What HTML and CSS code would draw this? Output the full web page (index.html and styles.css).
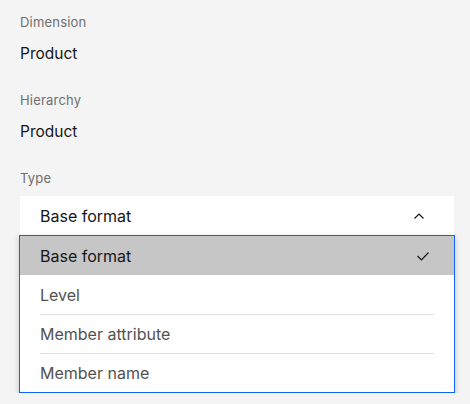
FILE: index.html
```html
<!DOCTYPE html>
<html lang="en">
<head>
  <meta charset="UTF-8" />
  <meta name="viewport" content="width=device-width, initial-scale=1.0" />
  <title>Type</title>
  <link rel="stylesheet" href="styles.css">
</head>
<body>
  <div class="panel">
    <div class="field">
      <div class="label">Dimension</div>
      <div class="value">Product</div>
    </div>
    <div class="field">
      <div class="label">Hierarchy</div>
      <div class="value">Product</div>
    </div>
    <div class="field select-field">
      <div class="label">Type</div>
      <div class="dropdown">
        <button type="button" class="dropdown-head">
          <span>Base format</span>
          <svg class="chevron" width="16" height="16" viewBox="0 0 16 16"><path d="M3.5 10.5 8 6l4.5 4.5" fill="none" stroke="#161616" stroke-width="1.2"/></svg>
        </button>
        <ul class="menu">
          <li class="option selected">
            <span class="option-text">Base format</span>
            <svg class="check" width="16" height="16" viewBox="0 0 16 16"><path d="M2.5 8 6.5 12 13.5 4.5" fill="none" stroke="#161616" stroke-width="1.2"/></svg>
          </li>
          <li class="option"><span class="option-text">Level</span></li>
          <li class="option"><span class="option-text">Member attribute</span></li>
          <li class="option"><span class="option-text">Member name</span></li>
        </ul>
      </div>
    </div>
  </div>
</body>
</html>
```

FILE: styles.css
```css
body {
  margin: 0;
  background-color: #f4f4f4;
  font-family: "Inter", "Noto Sans", sans-serif;
  color: #161616;
}
.panel {
  padding: 14px 16px 0 20px;
}
.field {
  margin-bottom: 29px;
}
.field:last-child {
  margin-bottom: 0;
}
.label {
  font-size: 13px;
  line-height: 16px;
  letter-spacing: 0.2px;
  color: #6f6f6f;
}
.value {
  margin-top: 15px;
  font-size: 15.5px;
  line-height: 18px;
  color: #161616;
}
.select-field .label {
  margin-bottom: 10px;
}
.dropdown {
  width: 434px;
}
.dropdown-head {
  display: flex;
  align-items: center;
  justify-content: space-between;
  width: 100%;
  height: 39px;
  padding: 0 27px 0 20px;
  border: none;
  background-color: #fff;
  font-family: inherit;
  font-size: 16px;
  color: #161616;
}
.menu {
  list-style: none;
  margin: 0 0 0 -1px;
  padding: 0;
  width: 434px;
  border: 1px solid #0f62fe;
  background-color: #fff;
  box-shadow: 0 2px 6px rgba(0, 0, 0, 0.2);
}
.option {
  height: 39px;
  padding: 0 20px;
}
.option-text {
  display: flex;
  align-items: center;
  height: 38px;
  border-top: 1px solid #e0e0e0;
  font-size: 16px;
  color: #525252;
}
.option:first-child .option-text,
.option:nth-child(2) .option-text {
  border-top-color: transparent;
}
.option.selected {
  display: flex;
  align-items: center;
  justify-content: space-between;
  background-color: #c6c6c6;
  padding-right: 23px;
}
.option.selected .option-text {
  color: #161616;
}
```
